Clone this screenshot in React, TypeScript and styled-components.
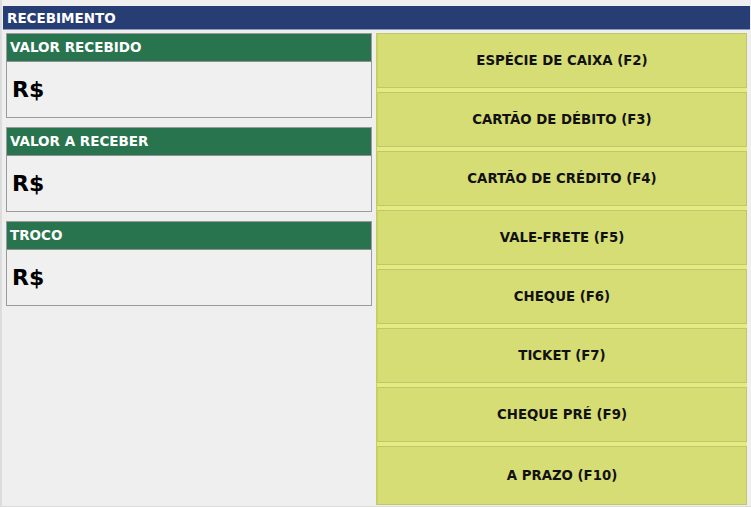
import React from "react";
import styled, { createGlobalStyle } from "styled-components";

const Global = createGlobalStyle`
  html, body { margin: 0; padding: 0; background: #efefef; }
  body { font-family: "DejaVu Sans", Verdana, sans-serif; }
`;

const Window = styled.div`
  width: 751px;
  height: 507px;
  box-sizing: border-box;
  border-left: 2px solid #dcdcdc;
  border-bottom: 1px solid #dcdcdc;
  padding-top: 6px;
  display: flex;
  flex-direction: column;
  overflow: hidden;
`;

const TitleBar = styled.div`
  height: 24px;
  margin: 0 1px 0 1px;
  background: #263e74;
  border-bottom: 1px solid #8a9bbd;
  color: #ffffff;
  font-weight: bold;
  font-size: 13.5px;
  line-height: 24px;
  padding-left: 4px;
  box-sizing: border-box;
`;

const Content = styled.div`
  flex: 1;
  display: flex;
  gap: 4px;
  padding: 3px 4px 1px 4px;
  min-height: 0;
`;

const LeftCol = styled.div`
  width: 366px;
  display: flex;
  flex-direction: column;
  gap: 9px;
`;

const Panel = styled.div`
  border: 1px solid #9b9b9b;
  background: #f0f0f0;
`;

const PanelHeader = styled.div`
  height: 27px;
  background: #27744e;
  border-bottom: 1px solid #8f8f8f;
  color: #ffffff;
  font-weight: bold;
  font-size: 13.5px;
  line-height: 27px;
  padding-left: 3px;
`;

const PanelBody = styled.div`
  height: 55px;
  display: flex;
  align-items: center;
  padding-left: 5px;
  font-weight: bold;
  font-size: 22px;
  color: #000000;
`;

const RightCol = styled.div`
  flex: 1;
  display: flex;
  flex-direction: column;
  gap: 4px;
  background: #e4eb83;
  border-left: 1px solid #c7ce5e;
`;

const PayButton = styled.button`
  height: 55px;
  flex: none;
  background: #d6dd74;
  border: 1px solid #c1c66b;
  border-left-color: #cad163;
  color: #111111;
  font-family: "DejaVu Sans", Verdana, sans-serif;
  font-weight: bold;
  font-size: 13.3px;
  padding: 0;
  margin: 0;
  cursor: pointer;

  &:last-child {
    flex: 1;
  }
`;

const panels = ["VALOR RECEBIDO", "VALOR A RECEBER", "TROCO"];
const buttons = [
  "ESPÉCIE DE CAIXA (F2)",
  "CARTÃO DE DÉBITO (F3)",
  "CARTÃO DE CRÉDITO (F4)",
  "VALE-FRETE (F5)",
  "CHEQUE (F6)",
  "TICKET (F7)",
  "CHEQUE PRÉ (F9)",
  "A PRAZO (F10)",
];

export default function App() {
  return (
    <>
      <Global />
      <Window>
        <TitleBar>RECEBIMENTO</TitleBar>
        <Content>
          <LeftCol>
            {panels.map((p) => (
              <Panel key={p}>
                <PanelHeader>{p}</PanelHeader>
                <PanelBody>R$</PanelBody>
              </Panel>
            ))}
          </LeftCol>
          <RightCol>
            {buttons.map((b) => (
              <PayButton key={b}>{b}</PayButton>
            ))}
          </RightCol>
        </Content>
      </Window>
    </>
  );
}
